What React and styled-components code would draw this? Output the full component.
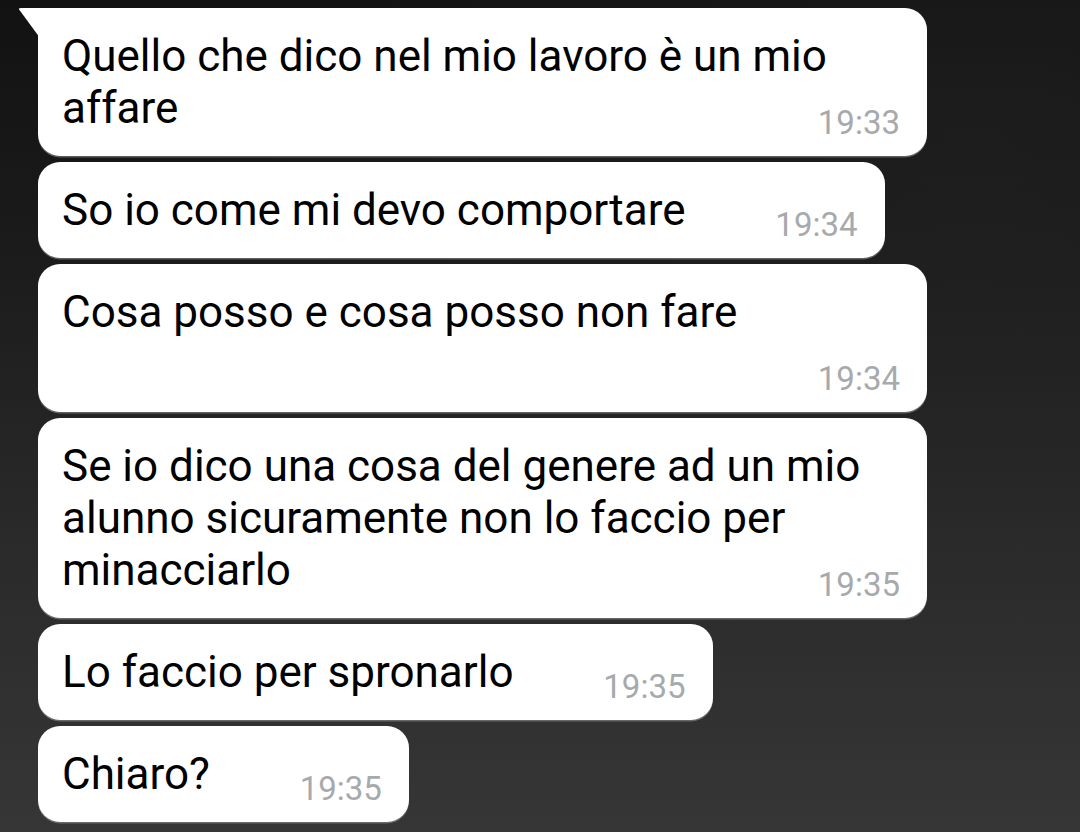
import React from "react";
import styled, { createGlobalStyle } from "styled-components";

const GlobalStyle = createGlobalStyle`
  html, body {
    margin: 0;
    padding: 0;
  }
  body {
    font-family: Roboto, "Noto Sans", sans-serif;
    background: #1a1a1a;
  }
`;

const ChatWrap = styled.div`
  width: 1080px;
  height: 832px;
  box-sizing: border-box;
  overflow: hidden;
  padding: 8px 0 0 38px;
  display: flex;
  flex-direction: column;
  align-items: flex-start;
  gap: 6px;
  background:
    radial-gradient(ellipse at 90% 15%, rgba(40, 40, 40, 0.35), transparent 55%),
    linear-gradient(180deg, #121212 0%, #1b1b1b 30%, #2a2a2a 65%, #363636 100%);
`;

const Bubble = styled.div`
  position: relative;
  box-sizing: border-box;
  max-width: 889px;
  background: #ffffff;
  border-radius: ${(p) => (p.tail ? "0 22px 22px 22px" : "22px")};
  padding: 22px 27px 22px 24px;
  box-shadow: 0 1.5px 0 rgba(150, 150, 150, 0.55);
  font-size: 44px;
  line-height: 52px;
  color: #000;

  &::before {
    content: ${(p) => (p.tail ? '""' : "none")};
    position: absolute;
    top: 0;
    left: -20px;
    width: 22px;
    height: 30px;
    background: #ffffff;
    clip-path: polygon(0 0, 100% 0, 100% 100%);
    border-top-left-radius: 3px;
  }
`;

const Spacer = styled.span`
  display: inline-block;
  width: ${(p) => p.w || 172}px;
  height: 1px;
`;

const Time = styled.span`
  position: absolute;
  right: 27px;
  bottom: 17px;
  font-size: 33px;
  line-height: 1;
  color: #a7aaac;
`;

const messages = [
  { text: "Quello che dico nel mio lavoro è un mio affare", time: "19:33", tail: true },
  { text: "So io come mi devo comportare", time: "19:34" },
  { text: "Cosa posso e cosa posso non fare", time: "19:34" },
  {
    text: "Se io dico una cosa del genere ad un mio alunno sicuramente non lo faccio per minacciarlo",
    time: "19:35",
  },
  { text: "Lo faccio per spronarlo", time: "19:35" },
  { text: "Chiaro?", time: "19:35" },
];

export default function App() {
  return (
    <>
      <GlobalStyle />
      <ChatWrap>
        {messages.map((m, i) => (
          <Bubble key={i} tail={m.tail}>
            {m.text}
            <Spacer w={m.spacer} />
            <Time>{m.time}</Time>
          </Bubble>
        ))}
      </ChatWrap>
    </>
  );
}
